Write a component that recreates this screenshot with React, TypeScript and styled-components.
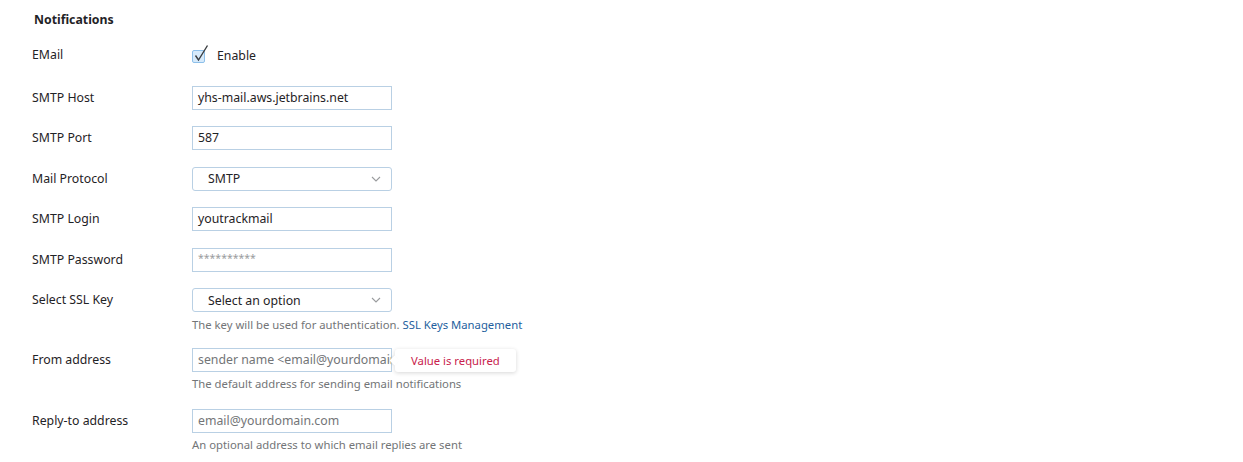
import React from 'react';
import styled, { createGlobalStyle } from 'styled-components';

const GlobalStyle = createGlobalStyle`
  body {
    margin: 0;
    background: #ffffff;
    font-family: "Segoe UI", "Noto Sans", "Open Sans", sans-serif;
    font-size: 12.3px;
    color: #1f2326;
  }
`;

const Page = styled.div`
  padding: 9px 32px 0;
  width: 1243px;
  height: 462px;
  box-sizing: border-box;
  overflow: hidden;
`;

const Title = styled.h3`
  margin: 1px 0 13px 2px;
  font-size: 12.3px;
  line-height: 20px;
  font-weight: 700;
  color: #1f2326;
`;

const Row = styled.div<{ $gap?: number }>`
  display: grid;
  grid-template-columns: 160px 1fr;
  align-items: start;
  margin-bottom: ${(p) => p.$gap ?? 16.5}px;
`;

const Label = styled.div`
  line-height: 24px;
  color: #1f2326;
`;

const Field = styled.div`
  position: relative;
  display: flex;
  flex-direction: column;
`;

const Input = styled.div<{ $placeholder?: boolean }>`
  box-sizing: border-box;
  width: 200px;
  height: 24px;
  border: 1px solid #b9d0e4;
  padding: 0 5px;
  line-height: 21px;
  white-space: nowrap;
  overflow: hidden;
  color: ${(p) => (p.$placeholder ? '#737577' : '#1f2326')};
`;

const Stars = styled.span`
  color: #9a9c9e;
  font-size: 10.5px;
  position: relative;
  top: -2px;
`;

const Select = styled.div`
  box-sizing: border-box;
  width: 200px;
  height: 24px;
  border: 1px solid #b9d0e4;
  border-radius: 3px;
  padding: 0 10px 0 15px;
  display: flex;
  align-items: center;
  justify-content: space-between;
  color: #1f2326;
`;

const Hint = styled.div`
  margin-top: 4.5px;
  line-height: 16px;
  font-size: 11.3px;
  color: #737577;
`;

const HintLink = styled.a`
  color: #1f5f9e;
  text-decoration: none;
`;

const CheckLine = styled.label`
  display: flex;
  align-items: center;
  height: 24px;
  gap: 12px;
`;

const CheckBox = styled.span`
  position: relative;
  box-sizing: border-box;
  width: 13px;
  height: 13px;
  margin-top: 2px;
  border: 1px solid #8ec0ea;
  border-radius: 2px;
  background: #d6eafb;
  svg {
    position: absolute;
    left: 0;
    top: -7px;
  }
`;

const Tooltip = styled.div`
  position: absolute;
  left: 203px;
  top: 1px;
  box-sizing: border-box;
  width: 121px;
  height: 23px;
  padding-left: 16px;
  line-height: 23px;
  font-size: 11.3px;
  color: #c8224c;
  background: #ffffff;
  border-radius: 3px;
  box-shadow: 0 1px 4px rgba(0, 0, 0, 0.16);
  &::before {
    content: '';
    position: absolute;
    left: -4px;
    top: 8px;
    width: 7px;
    height: 7px;
    background: #ffffff;
    transform: rotate(45deg);
    box-shadow: -1px 1px 2px rgba(0, 0, 0, 0.1);
  }
`;

const Chevron = () => (
  <svg width="10" height="6" viewBox="0 0 10 6">
    <path d="M1 1 L5 5 L9 1" fill="none" stroke="#9a9c9e" strokeWidth="1.1" />
  </svg>
);

export default function App() {
  return (
    <>
      <GlobalStyle />
      <Page>
        <Title>Notifications</Title>

        <Row $gap={18.5}>
          <Label>EMail</Label>
          <Field>
            <CheckLine>
              <CheckBox>
                <svg width="16" height="19" viewBox="0 0 16 19">
                  <path d="M2.5 11.5 L5.5 16 L14.5 1.5" fill="none" stroke="#3a3d40" strokeWidth="1.4" />
                </svg>
              </CheckBox>
              Enable
            </CheckLine>
          </Field>
        </Row>

        <Row>
          <Label>SMTP Host</Label>
          <Field>
            <Input>yhs-mail.aws.jetbrains.net</Input>
          </Field>
        </Row>

        <Row>
          <Label>SMTP Port</Label>
          <Field>
            <Input>587</Input>
          </Field>
        </Row>

        <Row>
          <Label>Mail Protocol</Label>
          <Field>
            <Select>
              SMTP
              <Chevron />
            </Select>
          </Field>
        </Row>

        <Row>
          <Label>SMTP Login</Label>
          <Field>
            <Input>youtrackmail</Input>
          </Field>
        </Row>

        <Row>
          <Label>SMTP Password</Label>
          <Field>
            <Input>
              <Stars>**********</Stars>
            </Input>
          </Field>
        </Row>

        <Row $gap={15}>
          <Label>Select SSL Key</Label>
          <Field>
            <Select>
              Select an option
              <Chevron />
            </Select>
            <Hint>
              The key will be used for authentication. <HintLink href="#">SSL Keys Management</HintLink>
            </Hint>
          </Field>
        </Row>

        <Row $gap={16.5}>
          <Label>From address</Label>
          <Field>
            <Input $placeholder>sender name &lt;email@yourdomain.com&gt;</Input>
            <Tooltip>Value is required</Tooltip>
            <Hint>The default address for sending email notifications</Hint>
          </Field>
        </Row>

        <Row>
          <Label>Reply-to address</Label>
          <Field>
            <Input $placeholder>email@yourdomain.com</Input>
            <Hint>An optional address to which email replies are sent</Hint>
          </Field>
        </Row>
      </Page>
    </>
  );
}
